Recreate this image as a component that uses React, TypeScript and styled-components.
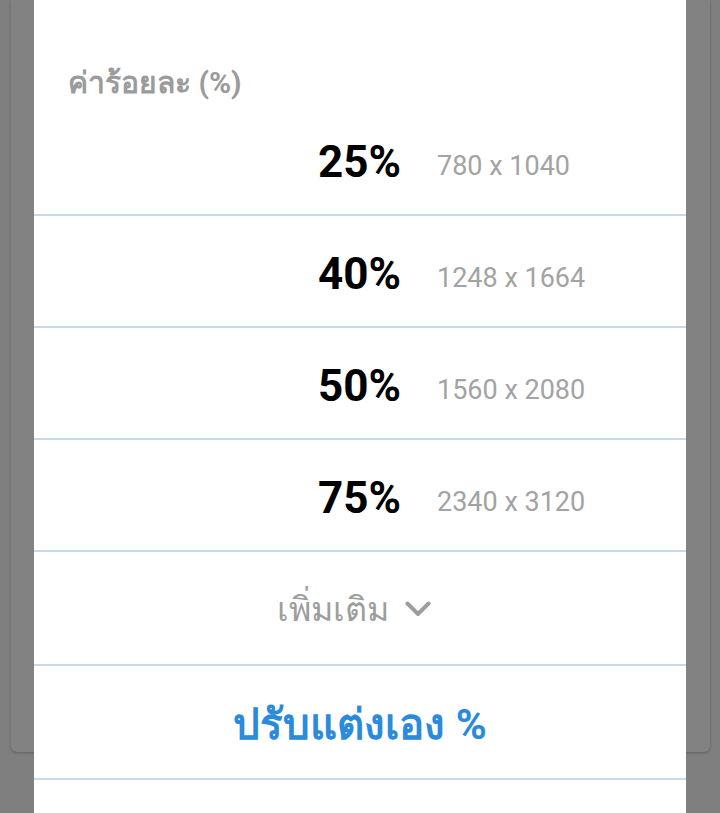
import React from "react";
import styled, { createGlobalStyle } from "styled-components";

const Global = createGlobalStyle`
  html, body { margin: 0; padding: 0; }
  body {
    width: 720px;
    height: 813px;
    overflow: hidden;
    background: #7f7f7f;
    font-family: Roboto, "Noto Sans", "DejaVu Sans", sans-serif;
  }
`;

const Screen = styled.div`
  position: relative;
  width: 720px;
  height: 813px;
  overflow: hidden;
  background: #7f7f7f;
`;

const BackCard = styled.div`
  margin: 0 10px 0 11px;
  height: 752px;
  background: #828282;
  border-radius: 0 0 6px 6px;
  box-shadow: 0 1px 3px rgba(0, 0, 0, 0.25);
`;

const Dialog = styled.div`
  position: absolute;
  top: 0;
  bottom: 0;
  left: 34px;
  width: 652px;
  background: #ffffff;
  display: flex;
  flex-direction: column;
`;

const Title = styled.div`
  height: 104px;
  box-sizing: border-box;
  padding: 62px 0 0 34px;
  font-size: 30px;
  font-weight: 700;
  color: #9b9b9b;
  line-height: 42px;
`;

const Row = styled.div<{ $h?: number }>`
  height: ${(p) => p.$h ?? 112}px;
  box-sizing: border-box;
  border-bottom: 2px solid #c3dbec;
  display: flex;
  align-items: center;
`;

const Percent = styled.div`
  width: 367px;
  text-align: right;
  font-size: 44px;
  font-weight: 700;
  color: #000;
  padding-top: 6px;
`;

const Dim = styled.div`
  margin-left: 36px;
  font-size: 27px;
  color: #a3a3a3;
  padding-top: 14px;
`;

const CenterRow = styled(Row)`
  justify-content: center;
`;

const More = styled.div`
  display: flex;
  align-items: center;
  gap: 16px;
  font-size: 34px;
  color: #9d9d9d;
  padding-top: 2px;
  padding-right: 12px;
`;

const Custom = styled.div`
  font-size: 42px;
  font-weight: 700;
  color: #2a8bdc;
  padding-top: 4px;
`;

const rows = [
  ["25%", "780 x 1040"],
  ["40%", "1248 x 1664"],
  ["50%", "1560 x 2080"],
  ["75%", "2340 x 3120"],
];

export default function App() {
  return (
    <Screen>
      <Global />
      <BackCard />
      <Dialog>
        <Title>ค่าร้อยละ (%)</Title>
        {rows.map(([p, d]) => (
          <Row key={p}>
            <Percent>{p}</Percent>
            <Dim>{d}</Dim>
          </Row>
        ))}
        <CenterRow $h={114}>
          <More>
            เพิ่มเติม
            <svg width="26" height="16" viewBox="0 0 26 16">
              <path d="M2.5 2.5 L13 13 L23.5 2.5" fill="none" stroke="#9d9d9d" strokeWidth="4" strokeLinecap="round" strokeLinejoin="round" />
            </svg>
          </More>
        </CenterRow>
        <CenterRow $h={114}>
          <Custom>ปรับแต่งเอง %</Custom>
        </CenterRow>
      </Dialog>
    </Screen>
  );
}
